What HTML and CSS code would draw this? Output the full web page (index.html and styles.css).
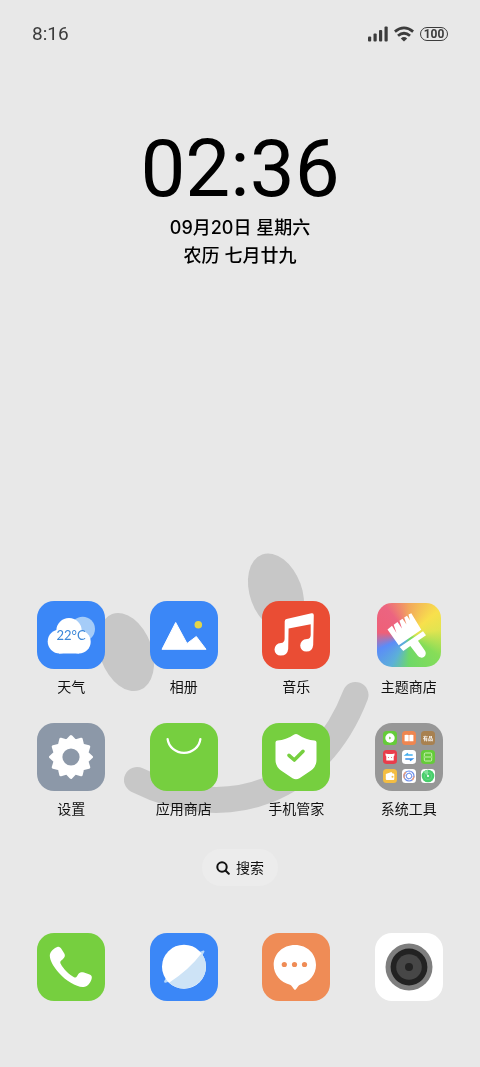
FILE: index.html
```html
<!DOCTYPE html>
<html lang="zh-CN">
<head>
    <meta charset="UTF-8">
    <meta name="viewport" content="width=device-width, initial-scale=1">
    <title>桌面</title>
    <link rel="stylesheet" href="styles.css">
</head>
<body>
    <!-- wallpaper -->
    <svg class="wallpaper" viewBox="0 0 480 1067" preserveAspectRatio="xMidYMax slice" aria-hidden="true">
        <g fill="#c7c7c7">
            <ellipse cx="126" cy="652" rx="26" ry="40.5" transform="rotate(-20 126 652)"/>
            <ellipse cx="276" cy="592.5" rx="26" ry="40.5" transform="rotate(-20 276 592.5)"/>
        </g>
        <path d="M137 780 C229 826 319 790 355.500 695" fill="none" stroke="#c7c7c7" stroke-width="26" stroke-linecap="round"/>
    </svg>

    <header class="status">
        <span class="status-time">8:16</span>
        <div class="status-icons">
            <svg width="20" height="16" viewBox="0 0 20 16" fill="#3c3c3c">
                <rect x="0" y="10.500" width="3.200" height="5" rx="1"/>
                <rect x="5.500" y="7.500" width="3.200" height="8" rx="1"/>
                <rect x="11" y="4" width="3.200" height="11.500" rx="1"/>
                <rect x="16.500" y="0.500" width="3.200" height="15" rx="1"/>
            </svg>
            <svg width="20" height="16" viewBox="0 0 20 16" fill="none" stroke="#3c3c3c" stroke-width="2.800">
                <path d="M0.900 5.600 Q10 -1.900 19.100 5.600"/>
                <path d="M4 9.800 Q10 4.700 16 9.800"/>
                <path d="M6.800 12.400 Q10 9.600 13.200 12.400 L10 15.500 Z" fill="#3c3c3c" stroke="none"/>
            </svg>
            <span class="battery">100</span>
        </div>
    </header>

    <section class="clock">
        <div class="clock-time">02:36</div>
        <div class="clock-date">09月20日 星期六</div>
        <div class="clock-date">农历 七月廿九</div>
    </section>

    <main class="apps">
        <a class="app" href="#">
            <svg class="icon blue" viewBox="0 0 68 68">
                <circle cx="45.700" cy="28" r="12.300" fill="#a5ccf8"/>
                <g fill="#fff">
                    <circle cx="22.700" cy="40.500" r="12"/>
                    <circle cx="42" cy="40.800" r="11.700"/>
                    <circle cx="32" cy="29.700" r="12.700"/>
                    <rect x="22" y="34" width="20" height="18.500"/>
                </g>
                <text class="temp" x="34" y="39" text-anchor="middle">22°C</text>
            </svg>
            <span>天气</span>
        </a>
        <a class="app" href="#">
            <svg class="icon blue" viewBox="0 0 68 68">
                <path d="M25.700 21.500 L37 42.500 L46.300 35.500 L56 48.300 L12 48.300 Z" fill="#fff" stroke="#fff" stroke-linejoin="round"/>
                <circle cx="48.300" cy="23.700" r="3.800" fill="#e2d54a"/>
            </svg>
            <span>相册</span>
        </a>
        <a class="app" href="#">
            <svg class="icon red" viewBox="0 0 68 68">
                <path fill="#fff" d="M22.700 20.500 Q22.700 18.500 24.500 18.100 L49.500 12.300 Q51.800 11.800 51.800 14.200 L51.200 44 Q50.500 50.600 44.500 50.600 A6 6 0 0 1 38.200 44.600 Q38.500 38.500 45 38 Q48.500 38 48.700 34 L48.700 23.300 L26.600 27.400 L26.200 48 Q25.500 54.600 18.800 54.600 A6 6 0 0 1 12.500 48.600 Q12.800 42.500 19 42 Q22.400 41.700 22.600 38 Z"/>
            </svg>
            <span>音乐</span>
        </a>
        <a class="app" href="#">
            <svg class="icon theme" viewBox="0 0 64 64">
                <g fill="#fff">
                    <path d="M10.500 26.500 L15 22.800 L19.500 30 L16.700 21.700 L20.500 19 L25 25.500 L22.500 17.700 L25.500 15.700 L29.500 21.500 L27.200 14.600 L30 12.700 L33 17.500 L31.500 11.600 L34.300 10.300 L44.300 26.700 L21.700 42.200 Z"/>
                    <path d="M22.700 44 L46 28.300 L49 32.200 L41 37.700 L47.800 47.500 A4.300 4.300 0 0 1 41 53 L33.300 43 L26.300 48 Z"/>
                </g>
            </svg>
            <span>主题商店</span>
        </a>
        <a class="app" href="#">
            <svg class="icon gray" viewBox="0 0 68 68">
                <g transform="translate(34 34)">
                    <path fill="#fff" stroke="#fff" stroke-width="3" stroke-linejoin="round" d="M20.500 0 L15.940 4.270 L17.750 10.250 L11.670 11.670 L10.250 17.750 L4.270 15.940 L0 20.500 L-4.270 15.940 L-10.250 17.750 L-11.670 11.670 L-17.750 10.250 L-15.940 4.270 L-20.500 0 L-15.940 -4.270 L-17.750 -10.250 L-11.670 -11.670 L-10.250 -17.750 L-4.270 -15.940 L0 -20.500 L4.270 -15.940 L10.250 -17.750 L11.670 -11.670 L17.750 -10.250 L15.940 -4.270 Z"/>
                    <circle r="8.600" fill="#8c98a8"/>
                </g>
            </svg>
            <span>设置</span>
        </a>
        <a class="app" href="#">
            <svg class="icon green" viewBox="0 0 68 68">
                <path d="M17.600 16 A16.500 15.500 0 0 0 50.400 16" fill="none" stroke="#fff" stroke-width="2.200" stroke-linecap="round"/>
            </svg>
            <span>应用商店</span>
        </a>
        <a class="app" href="#">
            <svg class="icon green" viewBox="0 0 68 68">
                <path fill="#fff" d="M31.800 11.700 Q34 10.300 36.200 11.700 Q44 17 52.500 17.500 Q54.500 17.700 54.500 19.500 L54.500 37 Q54.500 43.500 49 47.500 L37.500 55.200 Q34 57.300 30.500 55.200 L19 47.500 Q13.500 43.500 13.500 37 L13.500 19.500 Q13.500 17.700 15.500 17.500 Q24 17 31.800 11.700 Z"/>
                <path d="M27 32.300 L32.300 37 L41 28.300" fill="none" stroke="#76cf3f" stroke-width="3.600" stroke-linecap="round" stroke-linejoin="round"/>
            </svg>
            <span>手机管家</span>
        </a>
        <a class="app" href="#">
            <svg class="icon folder" viewBox="0 0 68 68">
                <g transform="translate(8 8)">
                    <rect width="14" height="14" rx="3.500" fill="#65cb3a"/>
                    <circle cx="7" cy="7" r="4.700" fill="#fff"/>
                    <path d="M6.200 5.500 L8.200 7 L6.200 8.500 Z" fill="#65cb3a"/>
                </g>
                <g transform="translate(27 8)">
                    <rect width="14" height="14" rx="3.500" fill="#ee8650"/>
                    <path d="M2.600 4 Q5 3.300 6.700 4 L6.700 10.300 L2.600 10.300 Z M7.300 4 Q9 3.300 11.400 4 L11.400 10.300 L7.300 10.300 Z" fill="#fff"/>
                </g>
                <g transform="translate(46 8)">
                    <rect width="14" height="14" rx="3.500" fill="#a88150"/>
                    <text class="youpin" x="7" y="9.300" text-anchor="middle">有品</text>
                </g>
                <g transform="translate(8 27)">
                    <rect width="14" height="14" rx="3.500" fill="#e93d4b"/>
                    <path d="M2.300 3.500 L4.800 4 L9.200 4 L11.700 3.500 L11.200 6 L10.700 6.500 L10.700 10.500 L3.300 10.500 L3.300 6.500 L2.800 6 Z" fill="#fff"/>
                    <path d="M5.200 7.500 H5.900 M8.100 7.500 H8.800" stroke="#e93d4b"/>
                </g>
                <g transform="translate(27 27)">
                    <rect width="14" height="14" rx="3.500" fill="#fff"/>
                    <path d="M10.700 5 H3.800 L6 3.300" fill="none" stroke="#42aef0" stroke-width="1.500"/>
                    <path d="M3.300 9 H10.200 L8 10.700" fill="none" stroke="#348fe8" stroke-width="1.500"/>
                </g>
                <g transform="translate(46 27)">
                    <rect width="14" height="14" rx="3.500" fill="#65cb3a"/>
                    <path d="M3.300 6 V4 Q3.300 3 4.300 3 H9.700 Q10.700 3 10.700 4 V6 M3.300 8 V10 Q3.300 11 4.300 11 H9.700 Q10.700 11 10.700 10 V8 M2.500 7 H11.500" fill="none" stroke="#d4f5bd" stroke-width="0.900"/>
                </g>
                <g transform="translate(8 46)">
                    <rect width="14" height="14" rx="3.500" fill="#f3bd42"/>
                    <path d="M2.800 5 L8.500 3 L9.500 4.500 H10.300 Q11.300 4.500 11.300 5.500 V10 Q11.300 11 10.300 11 H3.800 Q2.800 11 2.800 10 Z" fill="#fff"/>
                    <circle cx="9.500" cy="7.800" r="1" fill="#f3bd42"/>
                </g>
                <g transform="translate(27 46)" fill="none">
                    <rect width="14" height="14" rx="3.500" fill="#fff"/>
                    <circle cx="7" cy="7" r="5" stroke="#6b8fea" stroke-width="1.200"/>
                    <path d="M2.600 9.500 A5 5 0 0 1 4 3 M10 11 A5 5 0 0 0 12 7" stroke="#ef9a72" stroke-width="1.200"/>
                    <circle cx="7" cy="7" r="2.800" stroke="#6b8fea"/>
                    <path d="M7 2 L9.800 7 M12 7 L7 9.800 M7 12 L4.200 7 M2 7 L7 4.200" stroke="#8ba4ee" stroke-width="0.600"/>
                </g>
                <g transform="translate(46 46)">
                    <rect width="14" height="14" rx="3.500" fill="#fff"/>
                    <circle cx="7" cy="7" r="6.300" fill="#48ce6b"/>
                    <circle cx="7" cy="7" r="3.700" fill="none" stroke="#6bd987" stroke-width="0.800"/>
                    <path d="M7 7 L2.500 3 A6 6 0 0 1 7 0.700 Z" fill="#83e19b"/>
                    <circle cx="7" cy="7" r="1.100" fill="#fff"/>
                </g>
            </svg>
            <span>系统工具</span>
        </a>
    </main>

    <button class="search" type="button">
        <svg width="14" height="14" viewBox="0 0 14 14" fill="none" stroke="#111" stroke-width="2" stroke-linecap="round">
            <circle cx="6" cy="6" r="4.700"/>
            <path d="M9.700 9.700 L12.800 12.800"/>
        </svg>
        搜索
    </button>

    <nav class="dock">
        <a class="app" href="#" aria-label="电话">
            <svg class="icon green" viewBox="0 0 68 68">
                <path fill="#fff" d="M12.800 22.500 C12.800 18.500 17 15.200 20.300 13.900 C22.200 13.200 23.500 14.500 24.300 15.800 L27.300 20.500 C28.600 22.800 27.600 24.500 26 26 C23.800 28 22.600 28.500 23.800 31 C26.500 36 32 41.500 37 44.200 C39.400 45.300 39.800 43.500 41.200 41.300 C42.700 39.200 44.800 39 47 39.600 L52 41.200 C54.600 42.100 55.300 43.500 54.600 46 C53.300 50.500 50.500 53.500 46.500 53.900 C40 54.500 29 48 22 40 C16 33.300 12.800 27 12.800 22.500 Z"/>
            </svg>
        </a>
        <a class="app" href="#" aria-label="浏览器">
            <svg class="icon blue" viewBox="0 0 68 68">
                <path d="M47 20 L53.300 17.500 Q55 17.300 54.300 19 L51.500 24 Z M17 43.500 L14.200 48 Q13.500 50 15.500 49.800 L21 48 Z" fill="#b9dafa"/>
                <circle cx="34" cy="33.700" r="22" fill="#fff"/>
                <path d="M51.500 20.300 A22 22 0 0 1 19 49.700 Q39 37 51.500 20.300 Z" fill="#cde3f6"/>
            </svg>
        </a>
        <a class="app" href="#" aria-label="短信">
            <svg class="icon orange" viewBox="0 0 68 68">
                <path fill="#fff" d="M33 12 C45.500 12 54 21 54 32 C54 41.500 47.500 49.500 38 51.700 Q36.700 52.200 35.800 53.700 L34 56.200 Q33 57.200 32 56.200 L30.200 53.700 Q29.300 52.200 28 51.700 C18.500 49.500 11.700 41.500 11.700 32 C11.700 21 20.500 12 33 12 Z"/>
                <g fill="#ef8c56">
                    <circle cx="22.300" cy="31.500" r="2.600"/>
                    <circle cx="32.500" cy="31.500" r="2.600"/>
                    <circle cx="42.500" cy="31.500" r="2.600"/>
                </g>
            </svg>
        </a>
        <a class="app" href="#" aria-label="相机">
            <svg class="icon white" viewBox="0 0 68 68">
                <circle cx="34" cy="34" r="23.500" fill="#7e7e7e"/>
                <circle cx="34" cy="34" r="18.400" fill="#222"/>
                <circle cx="34" cy="34" r="12.800" fill="#474747"/>
                <circle cx="34" cy="34" r="4" fill="#242424"/>
            </svg>
        </a>
    </nav>
</body>
</html>
```
FILE: styles.css
```css
* {
    box-sizing: border-box;
}
body {
    margin: 0;
    min-height: 100vh;
    background-color: #e8e8e8;
    color: #111;
    font-family: "Noto Sans CJK SC", sans-serif;

    display: flex;
    flex-direction: column;
}
.wallpaper {
    position: fixed;
    left: 0;
    top: 0;
    width: 100%;
    height: 100%;
    z-index: -1;
}

.status {
    padding: 24px 32px 0;
    color: #3c3c3c;
    font-family: Roboto, sans-serif;

    display: flex;
    justify-content: space-between;
    align-items: center;
}
.status-time {
    font-size: 19px;
    line-height: 20px;
}
.status-icons {
    display: flex;
    align-items: center;
    gap: 6px;
}
.battery {
    width: 28px;
    height: 14px;
    border: 1px solid #3c3c3c;
    border-radius: 7px;
    font-size: 12px;
    line-height: 12px;
    font-weight: 700;
    text-align: center;
}

.clock {
    padding-top: 80px;
    color: #000;
    text-align: center;
}
.clock-time {
    font-family: Roboto, sans-serif;
    font-size: 80px;
    line-height: 90px;
}
.clock-date {
    font-family: Inter, "Noto Sans CJK SC", sans-serif;
    font-size: 18px;
    line-height: 28px;
    font-weight: 500;
}

.apps, .dock {
    padding: 0 15px;

    display: grid;
    grid-template-columns: repeat(4, 1fr);
}
.apps {
    margin-top: auto;
    padding-top: 40px;
    row-gap: 27px;
}
.app {
    color: #111;
    font-size: 14px;
    line-height: 20px;
    text-decoration: none;

    display: flex;
    flex-direction: column;
    align-items: center;
    gap: 7px;
}
.icon {
    width: 68px;
    height: 68px;
    border-radius: 17px;
}
.blue {
    background-color: #3b87f7;
}
.red {
    background-color: #ea4d34;
}
.gray {
    background-color: #8c98a8;
}
.green {
    background-color: #76cf3f;
}
.orange {
    background-color: #ef8c56;
}
.white {
    background-color: #fff;
}
.folder {
    background-color: #979797;
}
.theme {
    width: 64px;
    height: 64px;
    margin: 2px;
    border-radius: 15px;
    background: conic-gradient(#f2a85c, #f8e04c 50deg, #e2e450 80deg, #86dd58 125deg, #6ed868 180deg, #5cb0d8 210deg, #5b8cf8 245deg, #ee6078 275deg, #ec6480 320deg, #f2a85c);
}
.temp {
    fill: #3b87d8;
    font-family: Lato, sans-serif;
    font-size: 13px;
}
.youpin {
    fill: #fff;
    font-size: 5px;
    font-weight: 700;
}

.search {
    margin: 31px auto 47px;
    padding: 8px 14px;
    border: none;
    border-radius: 19px;
    background-color: #ececec;
    color: #111;
    font-family: inherit;
    font-size: 14px;
    line-height: 21px;

    display: flex;
    align-items: center;
    gap: 6px;
}
.dock {
    padding-bottom: 66px;
}
```
